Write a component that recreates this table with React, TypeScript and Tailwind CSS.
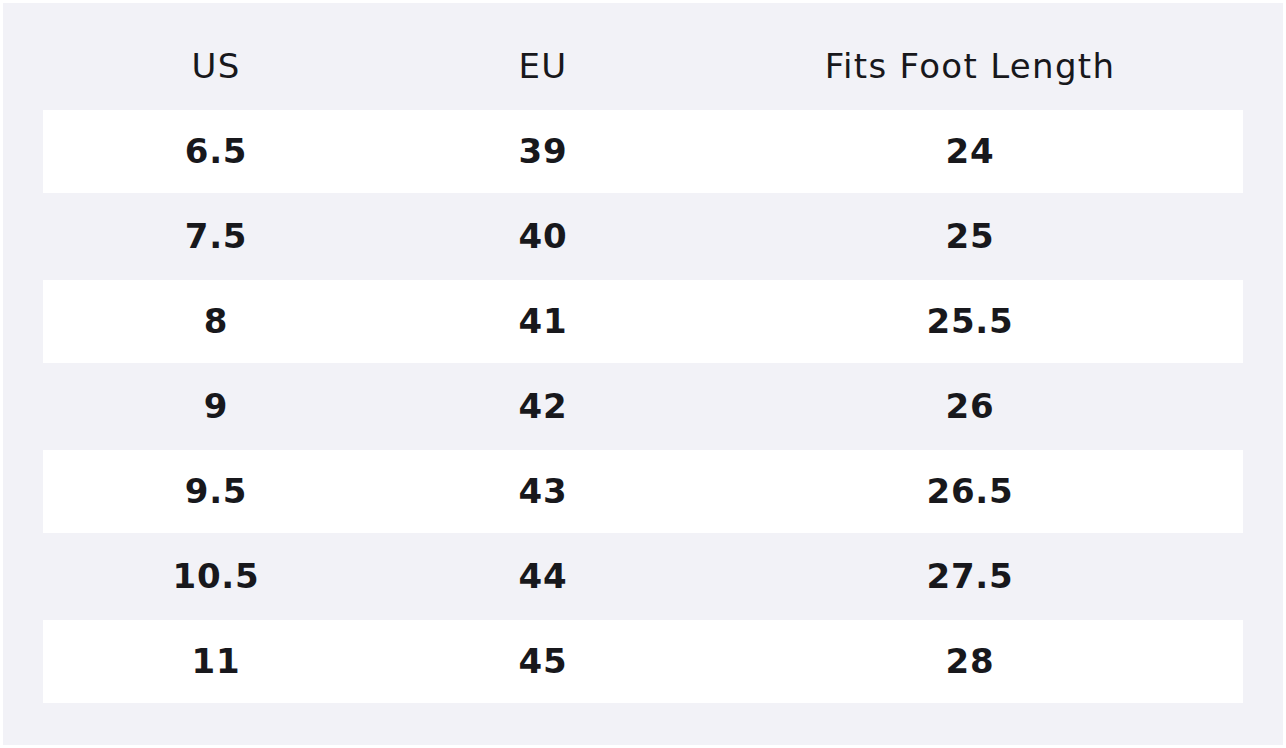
const ROWS = [
  ['6.5', '39', '24'],
  ['7.5', '40', '25'],
  ['8', '41', '25.5'],
  ['9', '42', '26'],
  ['9.5', '43', '26.5'],
  ['10.5', '44', '27.5'],
  ['11', '45', '28'],
];

const COLS = 'grid grid-cols-[346px_308px_546px] items-center text-center';

export default function App() {
  return (
    <div className="w-[1286px] h-[748px] bg-white p-[3px] font-['DejaVu_Sans',sans-serif] text-[#18181c]">
      <div className="h-[742px] bg-[#f2f2f7] px-10 pt-5">
        {/* Header */}
        <div className={`${COLS} h-[87px] text-[34px] tracking-[1.3px]`}>
          <div>US</div>
          <div>EU</div>
          <div>Fits Foot Length</div>
        </div>

        {ROWS.map((r, i) => (
          <div key={i}
            className={`${COLS} text-[34px] font-bold tracking-[0.8px] ${i % 2 === 0 ? 'bg-white h-[83px]' : 'h-[87px]'}`}>
            {r.map((c, j) => <div key={j}>{c}</div>)}
          </div>
        ))}
      </div>
    </div>
  );
}
